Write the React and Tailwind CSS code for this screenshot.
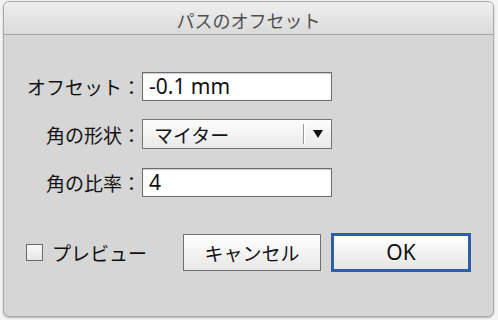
export default function App() {
  const jp = { fontFamily: '"Noto Sans CJK JP", sans-serif' };
  const mixed = { fontFamily: '"Noto Sans", "Noto Sans CJK JP", sans-serif' };

  return (
    <div className="w-[498px] h-[320px] bg-[#f4f4f4] pt-[1px] pl-[3px]" style={jp}>
      <div className="w-[491px] h-[316px] rounded-[6px] border border-[#a9a9a9] bg-[#d6d6d6] overflow-hidden flex flex-col shadow-[0_1px_2px_rgba(0,0,0,0.25)]">
        {/* タイトルバー */}
        <div className="h-[33px] shrink-0 border-b border-[#a4a4a4] bg-gradient-to-b from-[#efefef] to-[#dadada] flex items-center justify-center">
          <span className="text-[18px] leading-none text-[#4f4f4f] mt-[4px]">パスのオフセット</span>
        </div>

        {/* 本体 */}
        <div className="flex flex-col pt-[37px]">
          <div className="grid grid-cols-[138px_190px] items-center">
            <label className="text-right text-[19px] leading-none text-[#111] pr-[1px]">オフセット：</label>
            <div className="h-[29px] border border-[#6c6c6c] bg-white shadow-[inset_0_1px_1px_rgba(0,0,0,0.2)] flex items-center pl-[6px]">
              <span className="text-[21px] leading-none text-[#111]" style={mixed}>-0.1 mm</span>
            </div>
          </div>

          <div className="grid grid-cols-[138px_190px] items-center mt-[18px]">
            <label className="text-right text-[19px] leading-none text-[#111] pr-[1px]">角の形状：</label>
            <div className="h-[30px] border border-[#767676] bg-gradient-to-b from-[#fdfdfd] to-[#e9e9e9] flex items-center">
              <span className="flex-1 pl-[11px] text-[19px] leading-none text-[#111]">マイター</span>
              <div className="w-[1px] h-[20px] bg-[#9a9a9a] shadow-[1px_0_0_#fff]" />
              <div className="w-[27px] flex justify-center">
                <svg width="10" height="8" viewBox="0 0 10 8">
                  <path d="M0 0 H10 L5 8 Z" fill="#111" />
                </svg>
              </div>
            </div>
          </div>

          <div className="grid grid-cols-[138px_190px] items-center mt-[19px]">
            <label className="text-right text-[19px] leading-none text-[#111] pr-[1px]">角の比率：</label>
            <div className="h-[29px] border border-[#6c6c6c] bg-white shadow-[inset_0_1px_1px_rgba(0,0,0,0.2)] flex items-center pl-[6px]">
              <span className="text-[21px] leading-none text-[#111]" style={mixed}>4</span>
            </div>
          </div>

          {/* ボタン行 */}
          <div className="flex items-center mt-[36px] pl-[22px]">
            <div className="w-[17px] h-[17px] border border-[#6a6a6a] bg-gradient-to-b from-[#fafafa] to-[#e6e6e6]" />
            <span className="ml-[9px] text-[19px] leading-none text-[#111]">プレビュー</span>
            <button className="ml-[36px] w-[138px] h-[37px] border border-[#707070] bg-gradient-to-b from-[#ffffff] to-[#e8e8e8] text-[19px] leading-none text-[#111]">
              キャンセル
            </button>
            <button className="ml-[10px] w-[140px] h-[39px] border-[3px] border-[#2d5fa8] bg-gradient-to-b from-[#ffffff] to-[#e6e6e6] text-[21px] leading-none text-[#111]" style={mixed}>
              OK
            </button>
          </div>
        </div>
      </div>
    </div>
  );
}
